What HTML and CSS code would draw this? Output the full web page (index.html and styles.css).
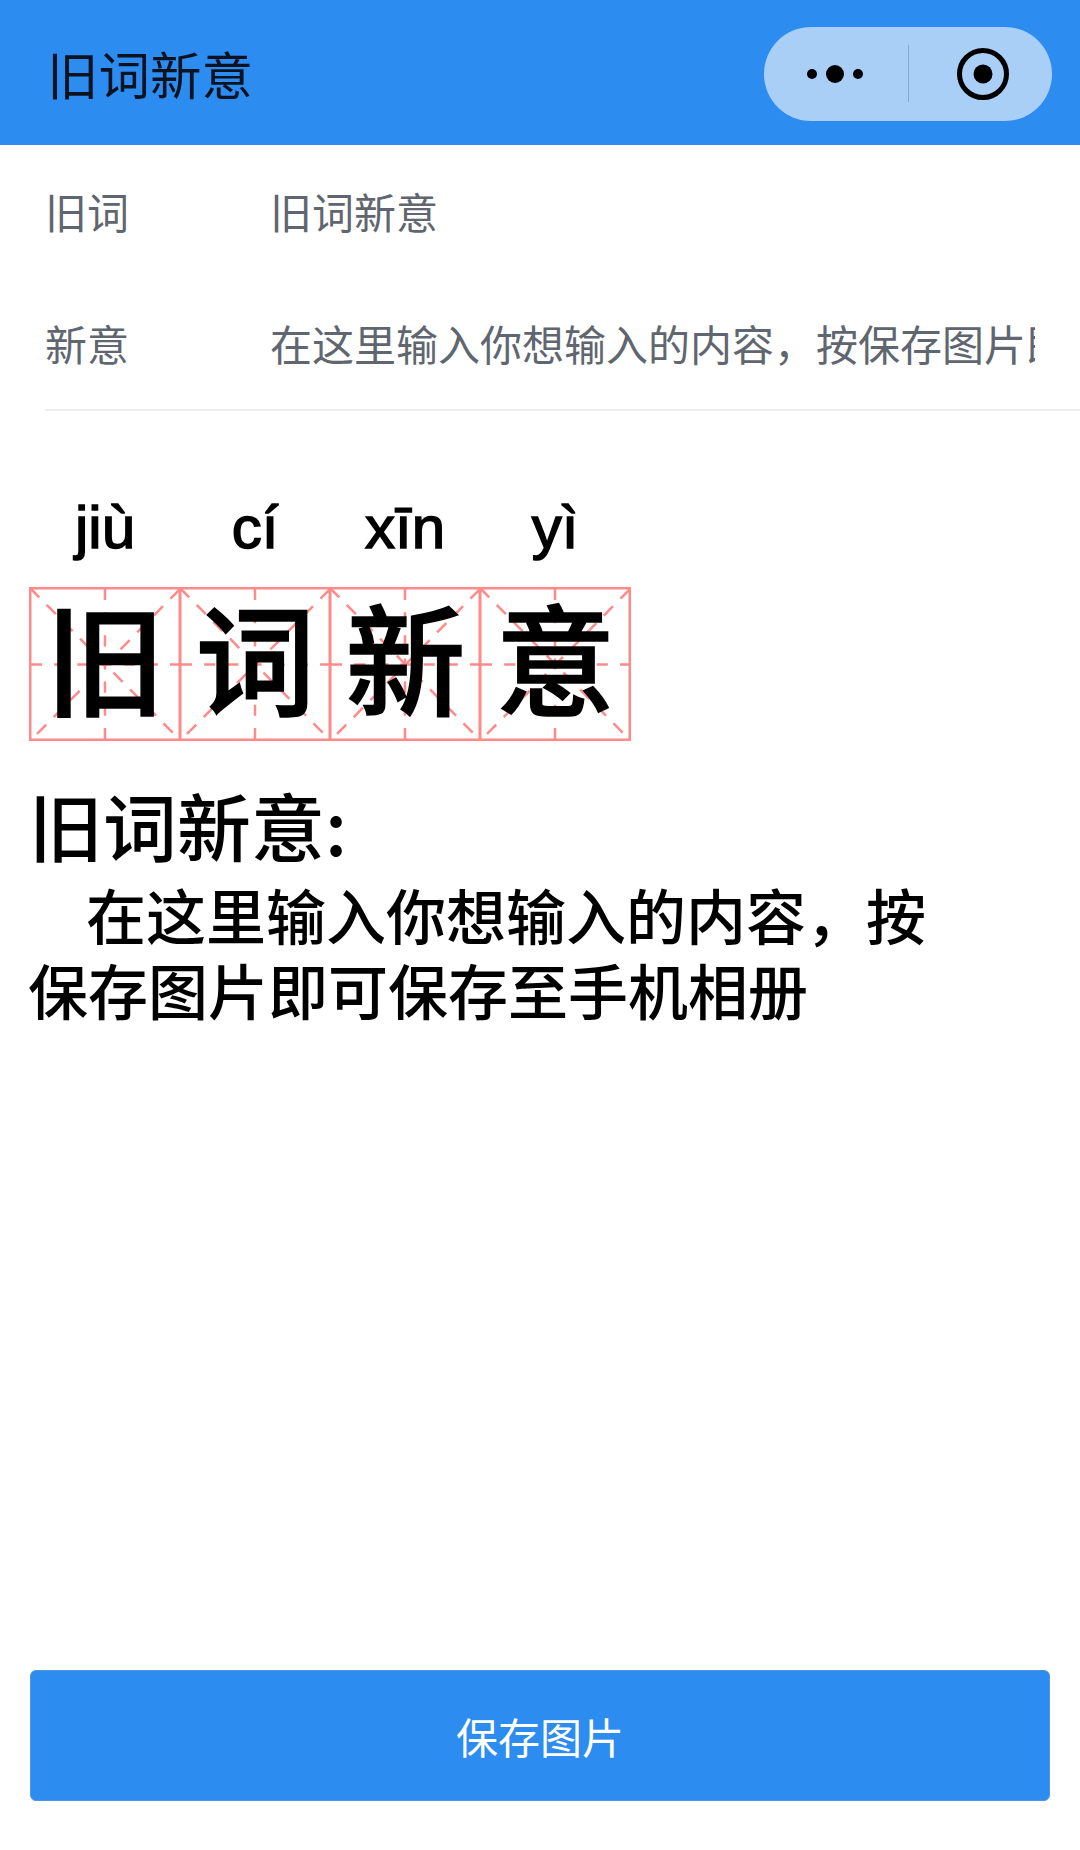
FILE: index.html
```html
<!DOCTYPE html>
<html lang="zh-CN">
<head>
    <meta charset="UTF-8">
    <meta name="viewport" content="width=device-width, initial-scale=1.0">
    <title>旧词新意</title>
    <link rel="stylesheet" href="styles.css">
</head>
<body>
 <div class="page">
    <div class="navbar">
        <h1 class="navbar-title">旧词新意</h1>
        <div class="capsule">
            <svg class="capsule-more" width="62" height="20" viewBox="0 0 62 20">
                <circle cx="6" cy="10" r="5"/>
                <circle cx="29" cy="10" r="9"/>
                <circle cx="52" cy="10" r="5"/>
            </svg>
            <span class="capsule-line"></span>
            <svg class="capsule-close" width="54" height="54" viewBox="0 0 54 54">
                <circle cx="27" cy="27" r="23.5" fill="none" stroke="#000" stroke-width="5"/>
                <circle cx="27" cy="27" r="9.5"/>
            </svg>
        </div>
    </div>

    <div class="form">
        <div class="form-row">
            <span class="form-label">旧词</span>
            <span class="form-value">旧词新意</span>
        </div>
        <div class="form-row form-row-last">
            <span class="form-label">新意</span>
            <span class="form-value">在这里输入你想输入的内容，按保存图片即可保存至手机相册</span>
        </div>
    </div>

    <svg width="0" height="0" class="defs">
        <symbol id="tian" viewBox="0 0 151 153" preserveAspectRatio="none">
            <g fill="none" stroke="#fd8b8b" stroke-width="2.5">
                <path d="M1 1L150 152" stroke-dasharray="13 10.6"/>
                <path d="M8 146L150 2" stroke-dasharray="13 10.6"/>
                <path d="M2 77H150" stroke-dasharray="11 12"/>
                <path d="M75.5 2V152" stroke-dasharray="11 12"/>
            </g>
            <rect x="1.25" y="1.25" width="148.5" height="150.5" fill="none" stroke="#fd8b8b" stroke-width="2.5"/>
        </symbol>
    </svg>

    <div class="word">
        <div class="word-col">
            <span class="pinyin">jiù</span>
            <div class="cell"><svg class="cell-grid"><use href="#tian"/></svg><span class="hanzi">旧</span></div>
        </div>
        <div class="word-col">
            <span class="pinyin">cí</span>
            <div class="cell"><svg class="cell-grid"><use href="#tian"/></svg><span class="hanzi">词</span></div>
        </div>
        <div class="word-col">
            <span class="pinyin">xīn</span>
            <div class="cell"><svg class="cell-grid"><use href="#tian"/></svg><span class="hanzi">新</span></div>
        </div>
        <div class="word-col">
            <span class="pinyin">yì</span>
            <div class="cell"><svg class="cell-grid"><use href="#tian"/></svg><span class="hanzi">意</span></div>
        </div>
    </div>

    <h2 class="meaning-title">旧词新意:</h2>
    <p class="meaning-text">在这里输入你想输入的内容，按保存图片即可保存至手机相册</p>

    <div class="footer">
        <button class="save-btn">保存图片</button>
    </div>
 </div>
</body>
</html>
```

FILE: styles.css
```css
* {
    box-sizing: border-box;
    font-family: "Noto Sans CJK SC", "Liberation Sans", sans-serif;
    text-spacing-trim: space-all;
}

body {
    margin: 0;
    background-color: #fff;
}

.page {
    display: flex;
    flex-direction: column;
    min-height: 1850px;
}

.navbar {
    display: flex;
    align-items: center;
    justify-content: space-between;
    height: 145px;
    padding: 2px 28px 0 47px;
    background-color: #2d8cf0;
}
.navbar-title {
    margin: 0 0 3px;
    font-size: 51.5px;
    font-weight: 400;
    color: #0b1220;
}

.capsule {
    display: flex;
    align-items: center;
    width: 288px;
    height: 94px;
    border-radius: 47px;
    background-color: #a9cff7;
}
.capsule-more {
    margin-left: 42px;
}
.capsule-line {
    width: 1px;
    height: 57px;
    margin-left: 40px;
    background-color: #84a9d2;
}
.capsule-close {
    margin-left: 47px;
}

.form {
    padding: 0 0 0 45px;
}
.form-row {
    display: flex;
    align-items: center;
    height: 131px;
    font-size: 42px;
    color: #5f6670;
}
.form-row-last {
    height: 135px;
    border-bottom: 2px solid #eeeff1;
}
.form-label {
    flex: 0 0 225px;
}
.form-value {
    width: 765px;
    overflow: hidden;
    white-space: nowrap;
}

.defs {
    position: absolute;
}

.word {
    display: flex;
    margin: 84px 0 0 29px;
}
.word-col {
    display: flex;
    flex-direction: column;
    width: 150px;
}
.pinyin {
    height: 92px;
    padding-left: 2px;
    font-family: "Liberation Sans", sans-serif;
    font-size: 60px;
    line-height: 66px;
    text-align: center;
    -webkit-text-stroke: 1.5px #000;
    color: #000;
}
.cell {
    position: relative;
    width: 152px;
    height: 154px;
    flex: none;
    padding-left: 1px;
    text-align: center;
}
.cell-grid {
    position: absolute;
    top: 0;
    left: 0;
    width: 152px;
    height: 154px;
}
.hanzi {
    position: relative;
    font-size: 120px;
    line-height: 137px;
    font-weight: 500;
    -webkit-text-stroke: 1.5px #000;
    color: #000;
}

.meaning-title {
    margin: 33px 0 0 29px;
    font-size: 74px;
    line-height: 100px;
    font-weight: 500;
    color: #000;
}
.meaning-text {
    width: 940px;
    margin: 3px 0 0 28px;
    font-size: 60px;
    line-height: 74.5px;
    font-weight: 500;
    text-indent: 58px;
    color: #000;
}

.footer {
    margin-top: auto;
    padding: 0 30px 49px;
}
.save-btn {
    display: block;
    width: 100%;
    height: 131px;
    border: 1px solid #4f97e4;
    border-radius: 6px;
    background-color: #2d8cf0;
    font-size: 42px;
    color: #fff;
}
```
